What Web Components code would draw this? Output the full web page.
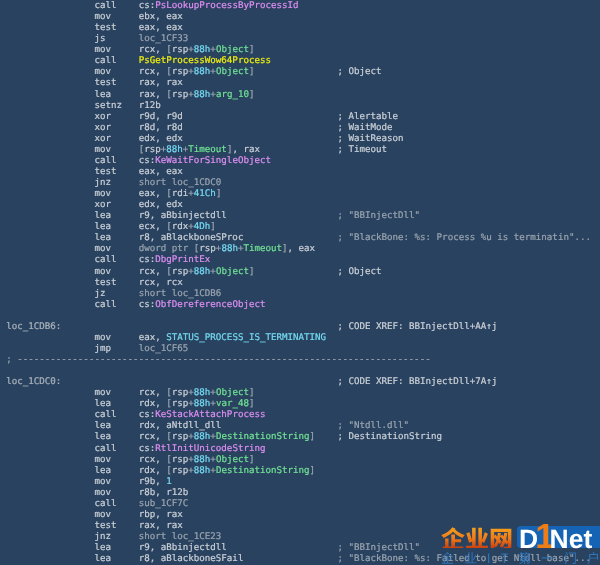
<!DOCTYPE html>
<html lang="en">
<head>
<meta charset="utf-8">
<title>BBInjectDll listing</title>
<style>
    html, body { margin: 0; height: 100%; overflow: hidden; background: #29425f; }
</style>
</head>
<body>
<ida-listing>
<asm-row op="call">cs:<asm-tok k="imp">PsLookupProcessByProcessId</asm-tok></asm-row>
<asm-row op="mov">ebx, eax</asm-row>
<asm-row op="test">eax, eax</asm-row>
<asm-row op="js"><asm-tok k="ref">loc_1CF33</asm-tok></asm-row>
<asm-row op="mov">rcx, <stack-ref name="Object"></stack-ref></asm-row>
<asm-row op="call"><asm-tok k="fn">PsGetProcessWow64Process</asm-tok></asm-row>
<asm-row op="mov" note="; Object">rcx, <stack-ref name="Object"></stack-ref></asm-row>
<asm-row op="test">rax, rax</asm-row>
<asm-row op="lea">rax, <stack-ref name="arg_10"></stack-ref></asm-row>
<asm-row op="setnz">r12b</asm-row>
<asm-row op="xor" note="; Alertable">r9d, r9d</asm-row>
<asm-row op="xor" note="; WaitMode">r8d, r8d</asm-row>
<asm-row op="xor" note="; WaitReason">edx, edx</asm-row>
<asm-row op="mov" note="; Timeout"><stack-ref name="Timeout"></stack-ref>, rax</asm-row>
<asm-row op="call">cs:<asm-tok k="imp">KeWaitForSingleObject</asm-tok></asm-row>
<asm-row op="test">eax, eax</asm-row>
<asm-row op="jnz"><asm-tok k="ref">short loc_1CDC0</asm-tok></asm-row>
<asm-row op="mov">eax, <asm-tok k="dim">[</asm-tok>rdi<asm-tok k="dim">+</asm-tok><asm-tok k="num">41Ch</asm-tok><asm-tok k="dim">]</asm-tok></asm-row>
<asm-row op="xor">edx, edx</asm-row>
<asm-row op="lea" str="; &quot;BBInjectDll&quot;">r9, aBbinjectdll</asm-row>
<asm-row op="lea">ecx, <asm-tok k="dim">[</asm-tok>rdx<asm-tok k="dim">+</asm-tok><asm-tok k="num">4Dh</asm-tok><asm-tok k="dim">]</asm-tok></asm-row>
<asm-row op="lea" str="; &quot;BlackBone: %s: Process %u is terminatin&quot;...">r8, aBlackboneSProc</asm-row>
<asm-row op="mov"><asm-tok k="ref">dword ptr</asm-tok> <stack-ref name="Timeout"></stack-ref>, eax</asm-row>
<asm-row op="call">cs:<asm-tok k="imp">DbgPrintEx</asm-tok></asm-row>
<asm-row op="mov" note="; Object">rcx, <stack-ref name="Object"></stack-ref></asm-row>
<asm-row op="test">rcx, rcx</asm-row>
<asm-row op="jz"><asm-tok k="ref">short loc_1CDB6</asm-tok></asm-row>
<asm-row op="call">cs:<asm-tok k="imp">ObfDereferenceObject</asm-tok></asm-row>
<asm-row></asm-row>
<asm-row label="loc_1CDB6:" note="; CODE XREF: BBInjectDll+AA↑j"></asm-row>
<asm-row op="mov">eax, <asm-tok k="num">STATUS_PROCESS_IS_TERMINATING</asm-tok></asm-row>
<asm-row op="jmp"><asm-tok k="ref">loc_1CF65</asm-tok></asm-row>
<asm-sep></asm-sep>
<asm-row></asm-row>
<asm-row label="loc_1CDC0:" note="; CODE XREF: BBInjectDll+7A↑j"></asm-row>
<asm-row op="mov">rcx, <stack-ref name="Object"></stack-ref></asm-row>
<asm-row op="lea">rdx, <stack-ref name="var_48"></stack-ref></asm-row>
<asm-row op="call">cs:<asm-tok k="imp">KeStackAttachProcess</asm-tok></asm-row>
<asm-row op="lea" str="; &quot;Ntdll.dll&quot;">rdx, aNtdll_dll</asm-row>
<asm-row op="lea" note="; DestinationString">rcx, <stack-ref name="DestinationString"></stack-ref></asm-row>
<asm-row op="call">cs:<asm-tok k="imp">RtlInitUnicodeString</asm-tok></asm-row>
<asm-row op="mov">rcx, <stack-ref name="Object"></stack-ref></asm-row>
<asm-row op="lea">rdx, <stack-ref name="DestinationString"></stack-ref></asm-row>
<asm-row op="mov">r9b, <asm-tok k="num">1</asm-tok></asm-row>
<asm-row op="mov">r8b, r12b</asm-row>
<asm-row op="call"><asm-tok k="ref">sub_1CF7C</asm-tok></asm-row>
<asm-row op="mov">rbp, rax</asm-row>
<asm-row op="test">rax, rax</asm-row>
<asm-row op="jnz"><asm-tok k="ref">short loc_1CE23</asm-tok></asm-row>
<asm-row op="lea" str="; &quot;BBInjectDll&quot;">r9, aBbinjectdll</asm-row>
<asm-row op="lea" str="; &quot;BlackBone: %s: Failed to get Ntdll base&quot;...">r8, aBlackboneSFail</asm-row>
<d1net-logo></d1net-logo>
</ida-listing>

<script>
// One token of an operand, coloured by kind. No whitespace in these templates: rows use white-space: pre
class AsmTok extends HTMLElement {
    constructor() {
        super();
        this.attachShadow({ mode: 'open' });
        this.shadowRoot.innerHTML = `<style>
                :host { display: inline; }
                :host([k=imp]) { color: #dc8df0; }
                :host([k=fn])  { color: #ecec10; }
                :host([k=num]) { color: #74d8f0; }
                :host([k=var]) { color: #70e094; }
                :host([k=ref]) { color: #98a3ae; }
                :host([k=dim]) { color: #98a3ae; }
            </style><slot></slot>`;
    }
}
customElements.define('asm-tok', AsmTok);

// [rsp+88h+name]
class StackRef extends HTMLElement {
    constructor() {
        super();
        this.attachShadow({ mode: 'open' });
    }

    connectedCallback() {
        const name = this.getAttribute('name');
        this.shadowRoot.innerHTML = `<style>
                :host { display: inline; }
                .d { color: #98a3ae; }
                .n { color: #74d8f0; }
                .v { color: #70e094; }
            </style><span class="d">[</span>rsp<span class="d">+</span><span class="n">88h</span><span class="d">+</span><span class="v">${name}</span><span class="d">]</span>`;
    }
}
customElements.define('stack-ref', StackRef);

class AsmRow extends HTMLElement {
    constructor() {
        super();
        this.attachShadow({ mode: 'open' });
    }

    connectedCallback() {
        const label = this.getAttribute('label') || '';
        const op = this.getAttribute('op') || '';
        const note = this.getAttribute('note') || '';
        const str = this.getAttribute('str') || '';

        this.shadowRoot.innerHTML = `<style>
                :host {
                    display: grid;
                    grid-template-columns: calc(var(--cw) * 16) calc(var(--cw) * 8) calc(var(--cw) * 36) auto;
                    height: var(--row);
                    line-height: var(--row);
                    white-space: pre;
                }
                .label { color: #a9b2bb; }
                .note { color: #c9cfd6; }
                .str { color: #98a3ae; }
            </style><span class="label">${label}</span><span>${op}</span><span><slot></slot></span><span class="${str ? 'str' : 'note'}">${(str || note).replace(/"/g, '&quot;')}</span>`;
    }
}
customElements.define('asm-row', AsmRow);

class AsmSep extends HTMLElement {
    constructor() {
        super();
        this.attachShadow({ mode: 'open' });
        this.shadowRoot.innerHTML = `<style>
                :host {
                    display: block;
                    height: var(--row);
                    line-height: var(--row);
                    white-space: pre;
                    color: #98a3ae;
                }
            </style>; ${'-'.repeat(75)}`;
    }
}
customElements.define('asm-sep', AsmSep);

class IdaListing extends HTMLElement {
    constructor() {
        super();
        this.attachShadow({ mode: 'open' });
        this.shadowRoot.innerHTML = `
            <style>
                :host {
                    --cw: 5.52px;
                    --row: 11.07px;
                    display: block;
                    position: relative;
                    width: 600px;
                    height: 565px;
                    box-sizing: border-box;
                    padding: 0 0 0 6.2px;
                    overflow: hidden;
                    background: #29425f;
                    color: #c9cfd6;
                    font: 9.17px "DejaVu Sans Mono", "Liberation Mono", monospace;
                    text-rendering: geometricPrecision;
                    -webkit-text-stroke: 0.22px currentColor;
                    filter: blur(0.25px);
                }
            </style>
            <slot></slot>
        `;
    }
}
customElements.define('ida-listing', IdaListing);

// Watermark in the bottom right corner, sits over the listing
class D1netLogo extends HTMLElement {
    constructor() {
        super();
        this.attachShadow({ mode: 'open' });
        this.shadowRoot.innerHTML = `
            <style>
                :host {
                    position: absolute;
                    left: 441px;
                    top: 520px;
                    width: 159px;
                    height: 45px;
                    overflow: hidden;
                    -webkit-text-stroke: 0;
                }
                .top { display: flex; align-items: flex-end; height: 28px; gap: 3px; }
                .cn {
                    width: 73px;
                    height: 21px;
                    font: 900 24px/21px "Noto Sans CJK SC", sans-serif;
                    white-space: nowrap;
                    background: linear-gradient(#f7a21e, #ef7a18 55%, #c9400f);
                    -webkit-background-clip: text;
                    background-clip: text;
                    color: transparent;
                }
                .box {
                    flex: 1;
                    height: 22px;
                    background: #1463b4;
                    border-radius: 4px 0 0 4px;
                    color: #fff;
                    font: bold 26.5px/22px "Liberation Sans", sans-serif;
                    padding-left: 2px;
                    white-space: nowrap;
                }
                .one {
                    color: #ee7d16;
                    font: bold 35px/22px "Liberation Sans", sans-serif;
                    letter-spacing: -5px;
                    margin-left: -3px;
                }
                .sub {
                    display: flex;
                    justify-content: space-between;
                    padding: 3px 0 0 0;
                    font: 13px/14px "Noto Sans CJK SC", sans-serif;
                    color: #2f74b8;
                }
            </style>
            <div class="top">
                <div class="cn">企业网</div>
                <div class="box">D<span class="one">1</span>Net</div>
            </div>
            <div class="sub"><span>企</span><span>业</span><span>I</span><span>T</span><span>第</span><span>一</span><span>门</span><span>户</span></div>
        `;
    }
}
customElements.define('d1net-logo', D1netLogo);
</script>
</body>
</html>
